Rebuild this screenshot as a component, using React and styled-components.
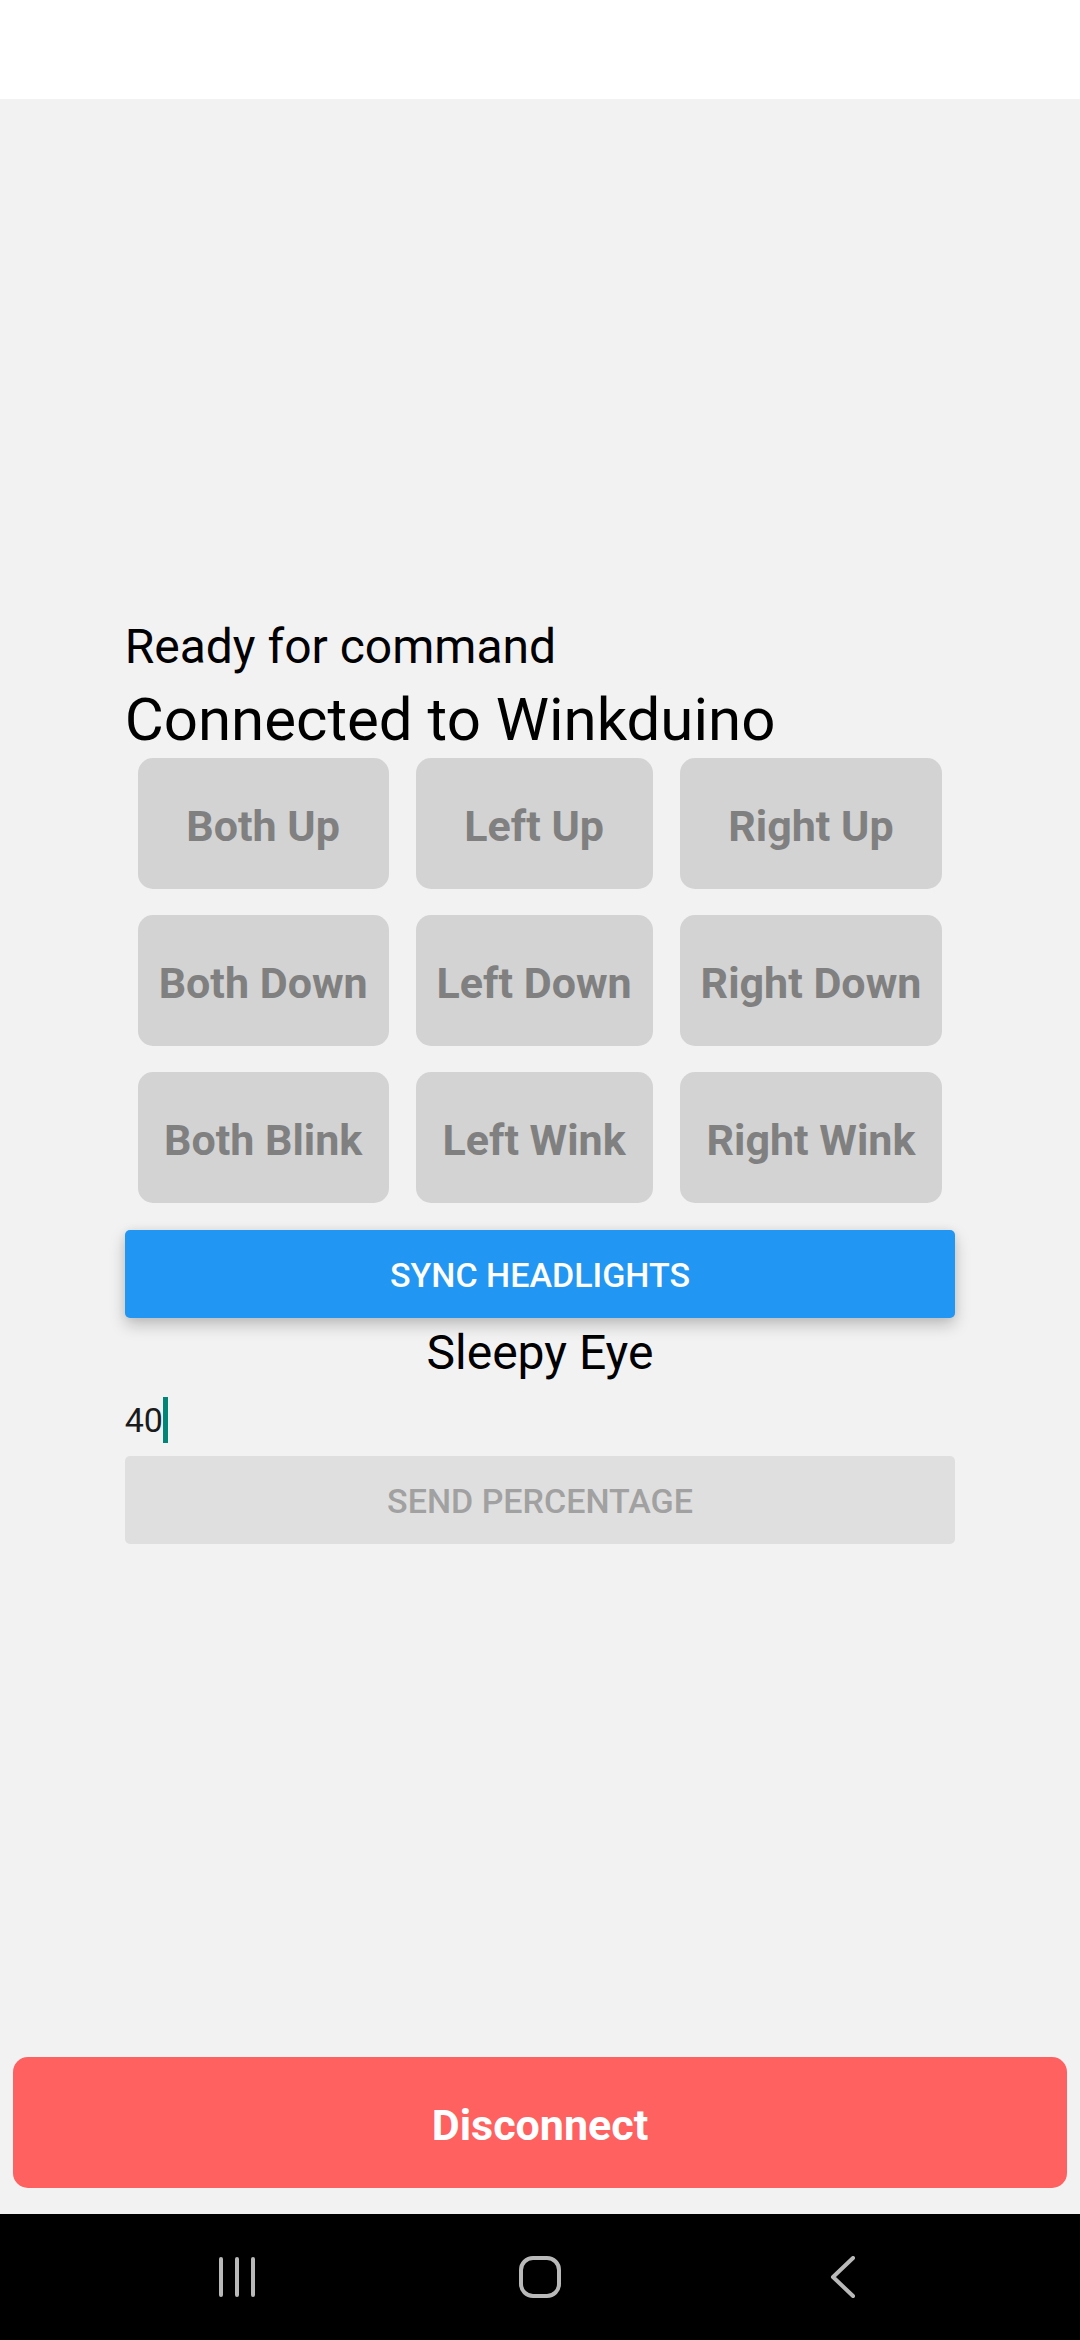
import React, { useState } from "react";
import styled, { createGlobalStyle, css } from "styled-components";

const GlobalStyle = createGlobalStyle`
  * { box-sizing: border-box; }
  body {
    margin: 0;
    background: #f2f2f2;
    color: #000;
    font-family: Roboto, "Noto Sans", sans-serif;
  }
  button, input { font-family: inherit; }
`;

const Screen = styled.div`
  display: flex;
  flex-direction: column;
  min-height: 100vh;
`;

const StatusBar = styled.header`
  height: 99px;
  background: #fff;
`;

const Main = styled.main`
  flex: 1;
  display: flex;
  flex-direction: column;
  align-items: center;
  justify-content: center;
`;

const Panel = styled.div`
  display: flex;
  flex-direction: column;
`;

const textLine = css`
  margin: 0;
  padding-top: 4px;
  font-weight: 400;
`;

const Status = styled.p`
  ${textLine}
  font-size: 48px;
  line-height: 62px;
`;

const Title = styled.h1`
  ${textLine}
  font-size: 60px;
  line-height: 76px;
`;

const SleepyLabel = styled.label`
  ${textLine}
  font-size: 48px;
  line-height: 62px;
  text-align: center;
`;

const CommandGrid = styled.div`
  display: grid;
  grid-template-columns: repeat(3, auto);
  gap: 26px 27px;
  padding: 0 13px 27px;
`;

const RoundedButton = styled.button`
  height: 131px;
  padding: 4px 21px 0;
  border: 0;
  border-radius: 15px;
  background: ${(p) => (p.$danger ? "#ff6060" : "#d3d3d3")};
  color: ${(p) => (p.$danger ? "#fff" : "#808080")};
  font-size: 43px;
  font-weight: 700;
  white-space: nowrap;
`;

const FlatButton = styled.button`
  height: 88px;
  padding: 2px 21px 0;
  border: 0;
  border-radius: 5px;
  background: #2196f3;
  color: #fff;
  font-size: 34px;
  font-weight: 500;
  text-transform: uppercase;
  box-shadow: 0 7px 16px rgba(0, 0, 0, 0.22), 0 0 8px rgba(0, 0, 0, 0.06);

  &:disabled {
    background: #dfdfdf;
    color: #a1a1a1;
    box-shadow: none;
  }
`;

const Field = styled.div`
  display: flex;
  align-items: center;
  height: 72px;
`;

const PercentInput = styled.input`
  width: ${(p) => Math.max(p.value.length, 1)}ch;
  padding: 0;
  border: 0;
  outline: 0;
  background: transparent;
  color: #1b1b1b;
  font-size: 34px;
  line-height: 46px;
  caret-color: transparent;
`;

const Caret = styled.span`
  width: 5px;
  height: 46px;
  background: #008577;
`;

const Footer = styled.footer`
  display: grid;
  padding: 0 13px 26px;
`;

const NavBar = styled.nav`
  display: grid;
  grid-template-columns: repeat(3, 1fr);
  height: 126px;
  padding: 0 87px;
  background: #000;
`;

const NavButton = styled.button`
  display: grid;
  place-items: center;
  padding: 0;
  border: 0;
  background: transparent;

  svg {
    fill: none;
    stroke: #b9b9b9;
    stroke-width: 4;
    stroke-linecap: round;
    stroke-linejoin: round;
  }
`;

const COMMANDS = [
  "Both Up", "Left Up", "Right Up",
  "Both Down", "Left Down", "Right Down",
  "Both Blink", "Left Wink", "Right Wink",
];

export default function App() {
  const [percent, setPercent] = useState("40");

  return (
    <Screen>
      <GlobalStyle />
      <StatusBar />
      <Main>
        <Panel>
          <Status>Ready for command</Status>
          <Title>Connected to Winkduino</Title>
          <CommandGrid>
            {COMMANDS.map((name) => (
              <RoundedButton key={name} type="button" disabled>{name}</RoundedButton>
            ))}
          </CommandGrid>
          <FlatButton type="button">Sync Headlights</FlatButton>
          <SleepyLabel htmlFor="percent">Sleepy Eye</SleepyLabel>
          <Field>
            <PercentInput
              id="percent"
              type="text"
              inputMode="numeric"
              value={percent}
              onChange={(e) => setPercent(e.target.value)}
            />
            <Caret />
          </Field>
          <FlatButton type="button" disabled>Send Percentage</FlatButton>
        </Panel>
      </Main>
      <Footer>
        <RoundedButton type="button" $danger>Disconnect</RoundedButton>
      </Footer>
      <NavBar>
        <NavButton type="button" aria-label="Recent apps">
          <svg width="42" height="42" viewBox="0 0 42 42">
            <path d="M4 3v36M20 3v36M36 3v36" />
          </svg>
        </NavButton>
        <NavButton type="button" aria-label="Home">
          <svg width="42" height="42" viewBox="0 0 42 42">
            <rect x="2" y="2" width="38" height="38" rx="12" />
          </svg>
        </NavButton>
        <NavButton type="button" aria-label="Back">
          <svg width="42" height="42" viewBox="0 0 42 42">
            <path d="M32 2L12 21l20 19" />
          </svg>
        </NavButton>
      </NavBar>
    </Screen>
  );
}
